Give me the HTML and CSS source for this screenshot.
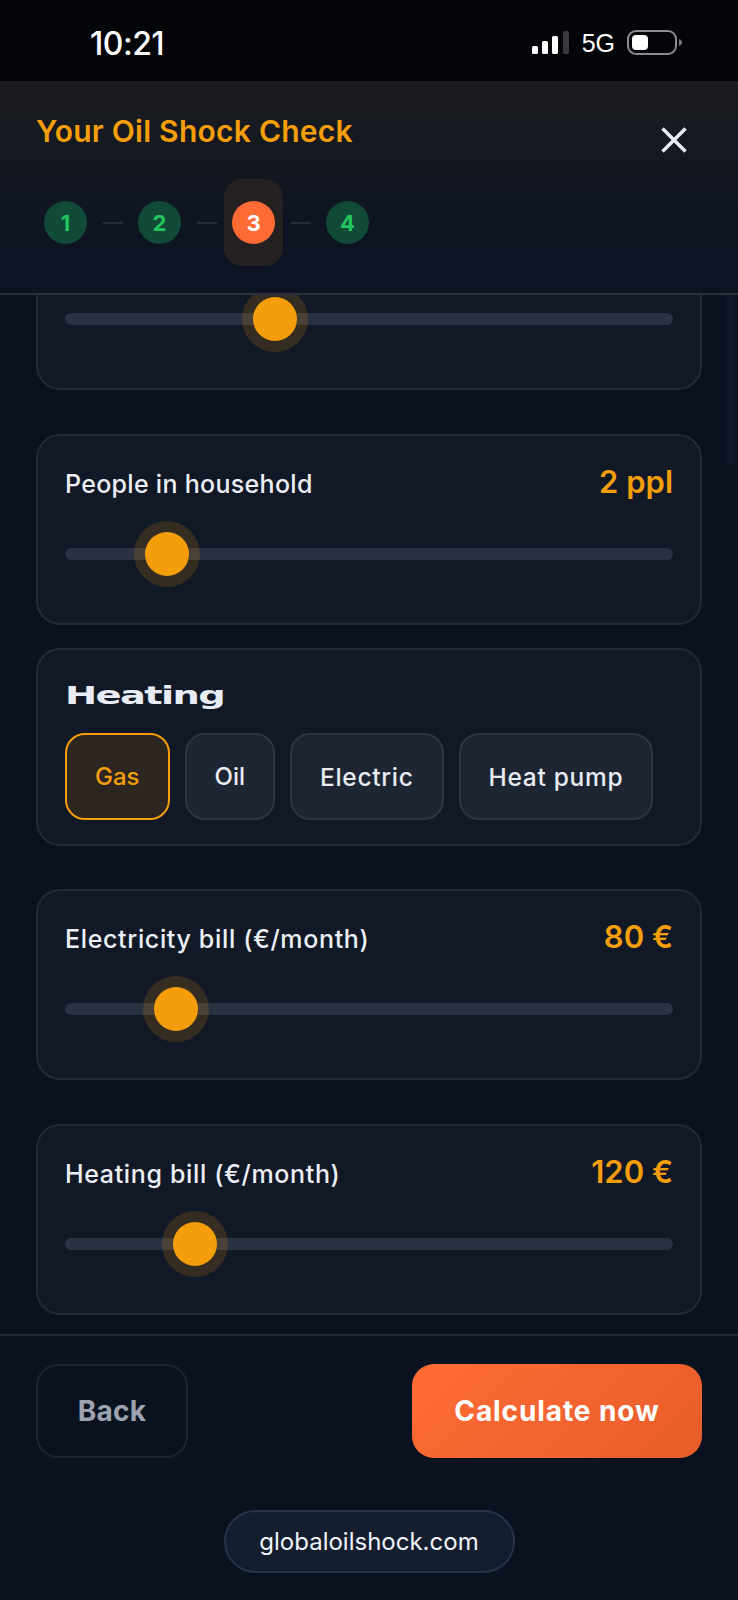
FILE: index.html
```html
<!DOCTYPE html>
<html lang="en">
<head>
    <meta charset="UTF-8">
    <meta name="viewport" content="width=device-width, initial-scale=1.0">
    <title>Your Oil Shock Check</title>
    <link rel="stylesheet" href="styles.css">
</head>
<body>
    <div class="status-bar">
        <span class="clock">10:21</span>
        <div class="status-icons">
            <svg class="signal" width="38" height="24" viewBox="0 0 38 24">
                <rect x="0" y="15" width="6" height="8" rx="1.5" fill="#fff"/>
                <rect x="10" y="10" width="6" height="13" rx="1.5" fill="#fff"/>
                <rect x="20" y="5" width="6" height="18" rx="1.5" fill="#fff"/>
                <rect x="31" y="0" width="6" height="23" rx="1.5" fill="#3a3b3d"/>
            </svg>
            <span class="network">5G</span>
            <svg class="battery" width="56" height="26" viewBox="0 0 56 26">
                <rect x="1" y="1" width="48" height="23" rx="8" fill="none" stroke="#8b8c8e" stroke-width="2"/>
                <rect x="5" y="5" width="16" height="15" rx="4" fill="#fff"/>
                <path d="M52 9c2 .6 3 2 3 3.500s-1 3-3 3.500z" fill="#77787a"/>
            </svg>
        </div>
    </div>

    <header class="check-header">
        <div class="title-row">
            <h1>Your Oil Shock Check</h1>
            <button class="close-btn" aria-label="Close">
                <svg width="26" height="26" viewBox="0 0 26 26">
                    <path d="M1.500 1.500l23 23M24.500 1.500l-23 23" stroke="#e9edf3" stroke-width="3.400" fill="none"/>
                </svg>
            </button>
        </div>
        <ol class="steps">
            <li class="step">1</li>
            <li class="step-dash"></li>
            <li class="step">2</li>
            <li class="step-dash"></li>
            <li class="step step-active">3</li>
            <li class="step-dash"></li>
            <li class="step">4</li>
        </ol>
    </header>

    <main class="form-scroll">
        <div class="scroll-hint"></div>

        <section class="card card-cut">
            <div class="slider"><div class="thumb" style="left: 34.5%"></div></div>
        </section>

        <section class="card card-slider card-tight">
            <div class="card-row">
                <span class="card-label">People in household</span>
                <span class="card-value">2 ppl</span>
            </div>
            <div class="slider"><div class="thumb" style="left: 16.8%"></div></div>
        </section>

        <section class="card card-heating">
            <h2>Heating</h2>
            <div class="chips">
                <button class="chip chip-short chip-on">Gas</button>
                <button class="chip chip-short">Oil</button>
                <button class="chip">Electric</button>
                <button class="chip">Heat pump</button>
            </div>
        </section>

        <section class="card card-slider">
            <div class="card-row">
                <span class="card-label card-label-bill">Electricity bill (€/month)</span>
                <span class="card-value">80 €</span>
            </div>
            <div class="slider"><div class="thumb" style="left: 18.2%"></div></div>
        </section>

        <section class="card card-slider">
            <div class="card-row">
                <span class="card-label card-label-bill">Heating bill (€/month)</span>
                <span class="card-value">120 €</span>
            </div>
            <div class="slider"><div class="thumb" style="left: 21.4%"></div></div>
        </section>
    </main>

    <footer class="check-footer">
        <div class="actions">
            <button class="btn-back">Back</button>
            <button class="btn-go">Calculate now</button>
        </div>
        <div class="site-pill">globaloilshock.com</div>
    </footer>
</body>
</html>
```

FILE: styles.css
```css
* {
    box-sizing: border-box;
}
body {
    margin: 0;
    width: 738px;
    height: 1600px;
    overflow: hidden;
    display: flex;
    flex-direction: column;
    background: #0a1220;
    color: #e8ecf2;
    font-family: Inter, "Liberation Sans", sans-serif;
}
button {
    font-family: inherit;
    cursor: pointer;
}

.status-bar {
    height: 81px;
    flex: none;
    display: flex;
    justify-content: space-between;
    align-items: center;
    padding: 5px 55px 0 90px;
    background: #040508;
    color: #fff;
}
.clock {
    font-size: 32px;
    font-weight: 500;
    letter-spacing: -0.5px;
}
.status-icons {
    display: flex;
    align-items: center;
    gap: 12px;
}
.network {
    font-size: 25px;
    font-family: "Liberation Sans", sans-serif;
}

.check-header {
    height: 214px;
    flex: none;
    padding: 34px 36px 0;
    background: linear-gradient(180deg, #1b1c1f 0%, #0d1422 70%, #0c1322 100%);
    border-bottom: 2px solid #2a2f38;
    position: relative;
    z-index: 2;
}
.title-row {
    display: flex;
    justify-content: space-between;
    align-items: flex-start;
}
h1 {
    margin: 0;
    font-size: 30px;
    line-height: 32px;
    font-weight: 600;
    letter-spacing: 0.25px;
    color: #f59e0b;
}
.close-btn {
    margin: 12px 15px 0 0;
    padding: 0;
    width: 26px;
    height: 26px;
    border: 0;
    background: none;
}
.steps {
    list-style: none;
    margin: 48px 0 0;
    padding: 0 0 0 8px;
    display: flex;
    align-items: center;
}
.step {
    width: 43px;
    height: 43px;
    border-radius: 50%;
    display: flex;
    align-items: center;
    justify-content: center;
    background: #114a36;
    color: #22c55e;
    font-size: 22px;
    font-weight: 700;
    position: relative;
}
.step-dash {
    width: 20px;
    height: 2px;
    margin: 0 15.500px;
    background: #272c36;
}
.step-active {
    background: #ff6b35;
    color: #fff;
}
.step-active::before {
    content: "";
    position: absolute;
    inset: -22px -8px;
    border-radius: 18px;
    background: #252120;
    z-index: -1;
}

.form-scroll {
    flex: 1;
    overflow: hidden;
    padding: 0 36px;
    position: relative;
    background: #0a1220;
}
.scroll-hint {
    position: absolute;
    top: -35px;
    right: 3px;
    width: 8px;
    height: 205px;
    background: #10172a;
    border-radius: 4px;
}
.card {
    background: #111927;
    border: 2px solid #232a36;
    border-radius: 24px;
    padding: 0 27px;
}
.card-cut {
    height: 191px;
    margin-top: -96px;
    padding-top: 112px;
    margin-bottom: 44px;
}
.card-slider {
    height: 191px;
    padding-top: 32px;
    margin-bottom: 44px;
}
.card-tight {
    margin-bottom: 23px;
}
.card-heating {
    height: 198px;
    padding-top: 31px;
    margin-bottom: 43px;
}
.card-row {
    display: flex;
    justify-content: space-between;
    align-items: center;
    height: 32px;
    margin-bottom: 48px;
}
.card-label {
    font-size: 25px;
    font-weight: 500;
    letter-spacing: 0.3px;
    color: #eceff4;
}
.card-label-bill {
    letter-spacing: 0.65px;
}
.card-value {
    font-size: 31px;
    font-weight: 600;
    margin-top: -5px;
    color: #f59e0b;
}
.slider {
    height: 12px;
    border-radius: 6px;
    background: #2a3140;
    position: relative;
}
.thumb {
    position: absolute;
    top: 50%;
    width: 44px;
    height: 44px;
    margin: -22px 0 0 -22px;
    border-radius: 50%;
    background: #f59e0b;
    box-shadow: 0 0 0 11px rgba(245, 158, 11, 0.16);
}

h2 {
    margin: 0 0 22px;
    height: 30px;
    font-family: "DejaVu Sans", sans-serif;
    font-size: 24px;
    line-height: 30px;
    font-weight: 700;
    letter-spacing: -1px;
    color: #e8ecf5;
    transform: scaleX(1.6);
    transform-origin: left center;
}
.chips {
    display: flex;
    gap: 15px;
}
.chip {
    height: 87px;
    padding: 0 28px;
    border: 2px solid #2e3542;
    border-radius: 20px;
    background: #1e2532;
    color: #e8ecf2;
    font-size: 24.500px;
    font-weight: 500;
    letter-spacing: 0.7px;
}
.chip-short {
    font-size: 24px;
    letter-spacing: 0;
}
.chip-on {
    background: #2d2520;
    border-color: #f59e0b;
    color: #f59e0b;
}

.check-footer {
    height: 266px;
    flex: none;
    padding: 28px 36px 0;
    border-top: 2px solid #232a36;
    background: #0a1220;
}
.actions {
    display: flex;
    justify-content: space-between;
}
.btn-back {
    width: 152px;
    height: 94px;
    border: 2px solid #1e2530;
    border-radius: 22px;
    background: none;
    color: #9ca3af;
    font-size: 28px;
    font-weight: 700;
    letter-spacing: 0.3px;
}
.btn-go {
    width: 290px;
    height: 94px;
    border: 0;
    border-radius: 22px;
    background: linear-gradient(135deg, #ff6b35, #e85d2a);
    color: #fff;
    font-size: 28px;
    font-weight: 700;
    letter-spacing: 0.9px;
}
.site-pill {
    width: 291px;
    height: 63px;
    margin: 52px auto 0;
    display: flex;
    align-items: center;
    justify-content: center;
    border: 2px solid #25324a;
    border-radius: 32px;
    background: #151e2e;
    color: #f0f3f8;
    font-size: 24px;
}
```
